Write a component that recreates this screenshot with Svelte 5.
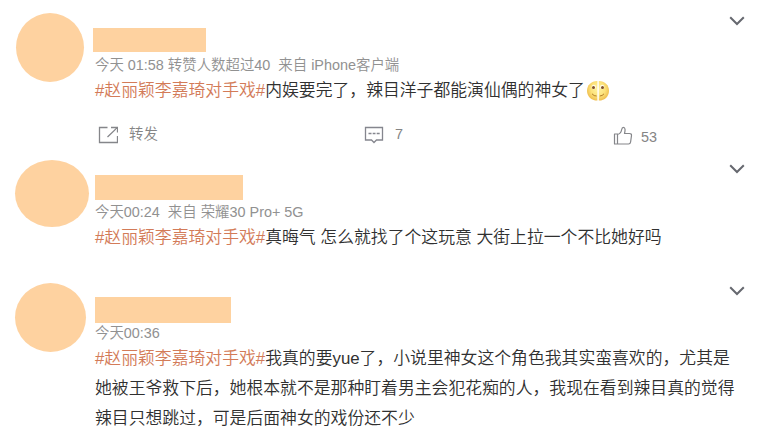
<script>
  const topic = '#赵丽颖李嘉琦对手戏#';
  const posts = [
    {
      id: 'first',
      meta: '今天 01:58 转赞人数超过40  来自 iPhone客户端',
      lines: ['内娱要完了，辣目洋子都能演仙偶的神女了'],
      emoji: true,
      actions: true
    },
    {
      id: 'second',
      meta: '今天00:24  来自 荣耀30 Pro+ 5G',
      lines: ['真晦气 怎么就找了个这玩意 大街上拉一个不比她好吗']
    },
    {
      id: 'third',
      meta: '今天00:36',
      lines: [
        '我真的要yue了，小说里神女这个角色我其实蛮喜欢的，尤其是',
        '她被王爷救下后，她根本就不是那种盯着男主会犯花痴的人，我现在看到辣目真的觉得',
        '辣目只想跳过，可是后面神女的戏份还不少'
      ]
    }
  ];
</script>

<main>
  {#each posts as post (post.id)}
    <article class={post.id}>
      <div class="avatar"></div>
      <div class="body">
        <div class="name"></div>
        <div class="meta">{post.meta}</div>
        <div class="text">
          {#each post.lines as line, i}
            <p>{#if i === 0}<span class="topic">{topic}</span>{/if}<span class="words">{line}</span>{#if post.emoji}<svg class="emoji" viewBox="0 0 24 22" width="24" height="22">
                  <defs>
                    <radialGradient id="face" gradientUnits="userSpaceOnUse" cx="12" cy="9" r="13">
                      <stop offset="0" stop-color="#fff2a2" />
                      <stop offset=".55" stop-color="#fce27a" />
                      <stop offset="1" stop-color="#ecb544" />
                    </radialGradient>
                  </defs>
                  <path d="M11.4 1C5 1 1 5.500 1 10.700S5 20.600 11.400 20.600Z" fill="url(#face)" />
                  <path d="M12.800 1C19 1 23 5.500 23 10.700S19 20.600 12.800 20.600Z" fill="url(#face)" />
                  <ellipse cx="7.800" cy="7" rx="2.100" ry="2.300" fill="#fffbe8" />
                  <ellipse cx="16.200" cy="7" rx="2.100" ry="2.300" fill="#fffbe8" />
                  <circle cx="7.500" cy="7.600" r="1.500" fill="#80502a" />
                  <circle cx="16.500" cy="7.600" r="1.500" fill="#80502a" />
                  <path d="M6 13.800Q8 16.300 10.600 16M13.800 16Q16.300 16 18 13.800" fill="none" stroke="#a8701f" stroke-width=".9" />
                </svg>{/if}</p>
          {/each}
        </div>
        {#if post.actions}
          <div class="actions">
            <div class="action share">
              <svg width="20" height="18" viewBox="0 0 20 18" fill="none" stroke="#85868a" stroke-width="1.300">
                <path d="M9.500 1.500H1.500V16.500H19.500V10M9.500 11L19 1.900M13 1.500H19.500V6.500" />
              </svg>
              <span>转发</span>
            </div>
            <div class="action comment">
              <svg width="20" height="18" viewBox="0 0 20 18" fill="none" stroke="#85868e" stroke-width="1.300">
                <path d="M1.500 1.500H18.500V14H12.500L10 16.500 7.500 14H1.500Z" />
                <path d="M4.500 7.500H7.500M8.700 7.500H11.500M12.700 7.500H15.700" />
              </svg>
              <span>7</span>
            </div>
            <div class="action like">
              <svg width="20" height="20" viewBox="0 0 20 20" fill="none" stroke="#85868a" stroke-width="1.200" stroke-linejoin="round">
                <path d="M1.500 8H4.500V18H1.500ZM4.500 8.500C7 8 8.200 6.200 8.700 3.500Q9 1.300 10.400 1.300C12.500 1.300 12.300 4.500 11.500 7.500H16.500Q18.700 7.500 18.500 9.500L17.600 16Q17.300 18 15.500 18H4.500Z" />
              </svg>
              <span>53</span>
            </div>
          </div>
        {/if}
      </div>
      <svg class="more" width="16" height="10" viewBox="0 0 16 10" fill="none" stroke="#66686f" stroke-width="2">
        <path d="M1.200 1.200L8 8 14.800 1.200" />
      </svg>
    </article>
  {/each}
</main>

<style>
  main {
    width: 762px;
    height: 443px;
    overflow: hidden;
    background: #fff;
    font-family: "Liberation Sans", "Noto Sans CJK SC", sans-serif;
    font-weight: 350;
  }
  article {
    display: flex;
    align-items: flex-start;
    box-sizing: border-box;
    width: 762px;
  }
  .first { height: 148px; padding: 13px 17px 0 16px; }
  .second { height: 121px; padding: 12px 17px 0 15px; }
  .third { height: 174px; padding: 14px 17px 0 15px; }
  .avatar {
    flex: none;
    width: 68px;
    height: 69px;
    border-radius: 50%;
    background: #fed2a0;
  }
  .second .avatar { width: 74px; height: 67px; }
  .third .avatar { width: 71px; height: 69px; }
  .body { flex: none; width: 634px; margin-left: 11px; }
  .second .body { margin-left: 6px; }
  .third .body { margin-left: 9px; }
  .name { width: 113px; height: 24px; margin-top: 15px; background: #fed2a0; }
  .first .name { margin-left: -2px; }
  .second .name { width: 148px; height: 25px; }
  .third .name { width: 136px; height: 26px; margin-top: 14px; }
  .meta {
    height: 20px;
    margin-top: 3px;
    color: #919191;
    font-size: 14.420px;
    line-height: 20px;
    white-space: pre;
  }
  .second .meta { margin-top: 2px; }
  .third .meta { margin-top: 0; }
  .text { margin-top: 1px; color: #303030; font-size: 16.840px; line-height: 30px; }
  p { display: flex; align-items: center; height: 30px; margin: 0; white-space: pre; }
  .topic { color: #d37b58; }
  .emoji { flex: none; margin: -1px 0 0 1px; }
  .actions {
    display: flex;
    align-items: flex-start;
    height: 30px;
    margin-top: 18px;
    color: #858585;
    font-size: 14.420px;
    line-height: 20px;
  }
  .action { display: flex; align-items: center; flex: none; height: 20px; }
  .action svg { position: relative; top: 1px; }
  .share { width: 269px; padding-left: 3px; gap: 11px; box-sizing: border-box; }
  .comment { width: 249px; gap: 11px; }
  .like { gap: 8px; margin-top: 3px; }
  .like svg { top: -1px; }
  .more { flex: none; margin-top: 3px; }
  .second .more { margin-top: 4px; }
</style>
